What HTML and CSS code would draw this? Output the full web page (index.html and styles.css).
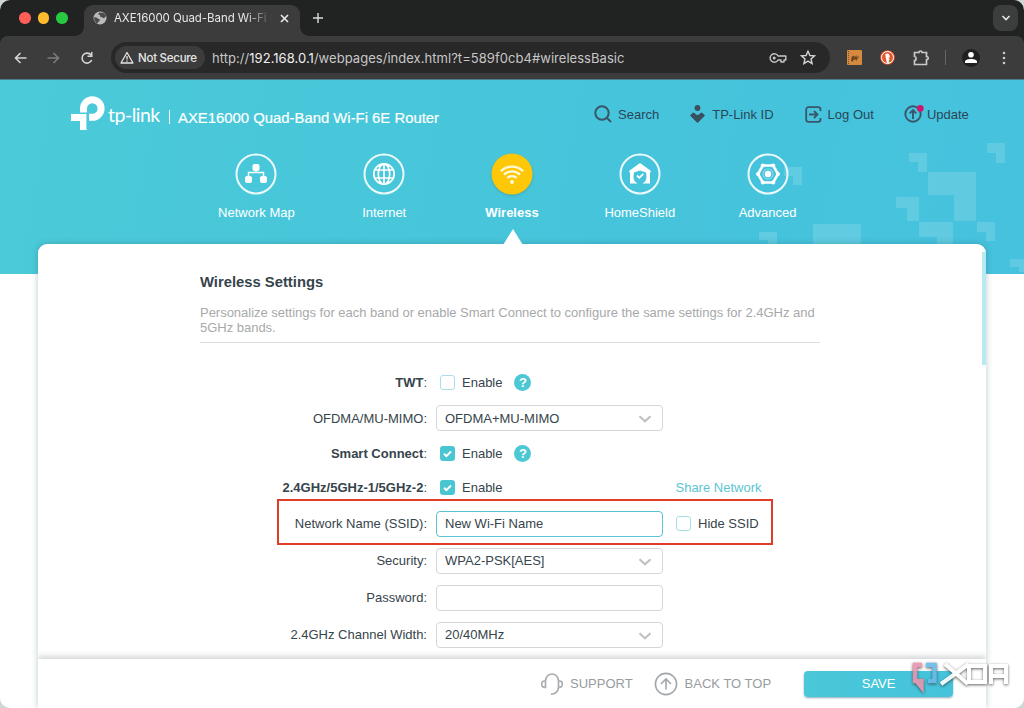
FILE: index.html
```html
<!DOCTYPE html>
<html lang="en">
<head>
<meta charset="utf-8">
<title>AXE16000 Quad-Band Wi-Fi 6E Router</title>
<link rel="stylesheet" href="styles.css">
</head>
<body>
<div class="window">
  <header class="chrome">
    <div class="tabstrip">
      <div class="lights"><i class="red"></i><i class="yellow"></i><i class="green"></i></div>
      <div class="tab">
        <svg class="globe" width="14" height="14" viewBox="0 0 14 14"><circle cx="7" cy="7" r="6.500" fill="#b9babb"/><path d="M1 6.200l2.500.2 1.700 1.400 1.600.6-.3 1.800-1.600.8-.2 1.500-1.600-.6L1.400 9zM6 1.500l-.8 1.900 2 .6-.3 1.600 2.100.7 1.600 1 2-1.300.2-1.800L10.500 2z" fill="#4a4a4a"/></svg>
        <span class="tab-title">AXE16000 Quad-Band Wi-Fi 6</span>
        <svg class="close" width="9" height="9" viewBox="0 0 9 9"><path d="M1 1l7 7M8 1L1 8" stroke="#e9e9e9" stroke-width="1.600"/></svg>
      </div>
      <svg class="plus" width="12" height="12" viewBox="0 0 12 12"><path d="M6 1v10M1 6h10" stroke="#dcdcdc" stroke-width="1.400"/></svg>
      <div class="tabmenu"><svg width="10" height="6" viewBox="0 0 10 6"><path d="M1.500 1L5 4.500 8.500 1" fill="none" stroke="#e4e4e4" stroke-width="1.600"/></svg></div>
    </div>
    <div class="toolbar">
      <svg class="nav" width="14" height="14" viewBox="0 0 14 14"><path d="M12.500 7H2M6.500 2L1.500 7l5 5" fill="none" stroke="#d4d4d4" stroke-width="1.600"/></svg>
      <svg class="nav fwd" width="14" height="14" viewBox="0 0 14 14"><path d="M.5 7H11M6.500 2l5 5-5 5" fill="none" stroke="#7c7c7c" stroke-width="1.600"/></svg>
      <svg class="nav reload" width="14" height="14" viewBox="0 0 14 14"><path d="M11.700 9A5 5 0 1 1 11 4M11.700 1v4.200H7.500" fill="none" stroke="#d4d4d4" stroke-width="1.600"/></svg>
      <div class="omnibox">
        <div class="chip">
          <svg width="14" height="13" viewBox="0 0 14 13"><path d="M7 1.500L13 12H1z" fill="none" stroke="#e3e3e3" stroke-width="1.300" stroke-linejoin="round"/><path d="M7 5v3.600M7 9.500v1.200" stroke="#e3e3e3" stroke-width="1.300"/></svg>
          <span>Not Secure</span>
        </div>
        <span class="url">http://<b>192.168.0.1</b>/webpages/index.html?t=589f0cb4#wirelessBasic</span>
        <svg class="key" width="18" height="12" viewBox="0 0 18 12"><path d="M9 4a4.200 4.200 0 1 0 0 4h3v2h3V8h1.800V4z" fill="none" stroke="#c7c7c7" stroke-width="1.400" stroke-linejoin="round"/><circle cx="5.200" cy="6" r="1.500" fill="#c7c7c7"/></svg>
        <svg class="star" width="16" height="15" viewBox="0 0 16 15"><path d="M8 1.200l1.900 4.300 4.700.4-3.600 3.100 1.100 4.600L8 11.100l-4.100 2.500L5 9 1.400 5.900l4.700-.4z" fill="none" stroke="#d2d2d2" stroke-width="1.400"/></svg>
      </div>
      <div class="exts">
        <svg width="15" height="15" viewBox="0 0 15 15"><rect width="15" height="15" rx="1" fill="#d68a3f"/><path d="M1.500 1v13" stroke="#76502b" stroke-dasharray="1 1"/><path d="M4 11l.6-4 1.800-1.500L8 7l1.300-2 .5 2.500L12 5.200l-1 3.300-1 .5-.3 2-1-1.500-2 .3-.7 1.700z" fill="#70461c"/></svg>
        <svg class="duck" width="15" height="15" viewBox="0 0 15 15"><circle cx="7.500" cy="7.500" r="7.300" fill="#e4572e"/><circle cx="7.500" cy="7.500" r="6" fill="none" stroke="#fff"/><path d="M5.300 4.200c2-1.500 4.500-.2 4.400 2.600l-.6 1.400.7 4.400-2.800.5-1.200-5.200z" fill="#fff"/><path d="M8.300 7.200l2.200.4-2 .8z" fill="#f6b82d"/><circle cx="9.500" cy="11" r="1" fill="#56a54a"/></svg>
        <svg class="puzzle" width="17" height="16" viewBox="0 0 17 16"><path d="M1.500 2.500H6c-.1-2 3-2 3 0h4.500v4c2.300-.1 2.300 3.300 0 3.200v4.800h-12v-4c2.200-.2 2.200-3.800 0-4z" fill="none" stroke="#c9c9c9" stroke-width="1.700"/></svg>
        <i class="divider"></i>
        <div class="avatar"><svg width="12" height="11" viewBox="0 0 12 11"><circle cx="6" cy="2.800" r="2.800" fill="#fff"/><path d="M0 11V9.500C0 6 12 6 12 9.500V11z" fill="#fff"/></svg></div>
        <svg class="kebab" width="4" height="14" viewBox="0 0 4 14" fill="#c9c9c9"><circle cx="2" cy="2" r="1.300"/><circle cx="2" cy="7" r="1.300"/><circle cx="2" cy="12" r="1.300"/></svg>
      </div>
    </div>
  </header>

  <main class="page">
    <svg class="pixels" width="274" height="194" viewBox="0 0 274 194" fill="#fff" fill-opacity=".14">
      <path d="M34 87h18v18h-9v-9h-9zM159 73h18v19h-9V82h-9zM237 63h18v20h-9V73h-9zM178 92h48v49h-22v-26h-26zM146 117h23v24h-12v-13h-11zM169 142h34v22h-16v-7h-18zM227 142h18v19h-9v-9h-9zM63 144h48v20H63zM9 152h18v12h-9v-4H9zM260 179h14v13h-5v-5h-9z"/>
    </svg>
    <div class="topline">
      <svg class="mark" width="35" height="34" viewBox="0 0 35 34"><path d="M13.500 16.500V12.500a8.800 8.800 0 1 1 8.800 8.800H19" fill="none" stroke="#fff" stroke-width="7"/><path d="M1 18h15.800v16h-6.800v-9H1z" fill="#fff"/><path d="M9 17.500h8V33" fill="none" stroke="#49c7db" stroke-width="1"/></svg>
      <span class="brand">tp-link</span><i class="bar"></i>
      <span class="model">AXE16000 Quad-Band Wi-Fi 6E Router</span>
      <a class="act search"><svg width="18" height="18" viewBox="0 0 18 18" fill="none" stroke="#39566a" stroke-width="2"><circle cx="8" cy="8" r="6.700"/><path d="M13 13l4 4"/></svg>Search</a>
      <a class="act tpid"><svg width="15" height="18" viewBox="0 0 15 18" fill="#39505f"><circle cx="7.500" cy="3" r="2.900"/><path d="M0 10.500L3 7.500l1.500.5q3 4 6 0L12 7.500l3 3L7.500 18z"/></svg>TP-Link ID</a>
      <a class="act logout"><svg width="17" height="17" viewBox="0 0 17 17" fill="none" stroke="#39566a" stroke-width="1.800"><path d="M15.500 5V3.500a2.300 2.300 0 0 0-2.300-2.300H3.500a2.300 2.300 0 0 0-2.300 2.300v10a2.300 2.300 0 0 0 2.300 2.300h9.700a2.300 2.300 0 0 0 2.300-2.300V12M4 8.500h8M9 5l3.500 3.500L9 12"/></svg>Log Out</a>
      <a class="act update"><svg width="20" height="18" viewBox="0 0 20 18"><g fill="none" stroke="#39566a" stroke-width="1.900"><circle cx="9" cy="9" r="7.700"/><path d="M9 14V5M5.700 8.300L9 5l3.300 3.300"/></g><circle cx="16.300" cy="3.400" r="3.300" fill="#d1126e"/></svg>Update</a>
    </div>
    <nav class="menu">
      <a><svg width="42" height="42" viewBox="0 0 42 42"><circle class="ring" cx="21" cy="21" r="19.500"/><rect x="17.500" y="11" width="7" height="7" rx="2" fill="#fff"/><rect x="10" y="23" width="7" height="7" rx="2" fill="#fff"/><rect x="25" y="23" width="7" height="7" rx="2" fill="#fff"/><path d="M21 17v3M13.500 24v-4.500h15V24" fill="none" stroke="#fff" stroke-width="1.500"/></svg><span>Network Map</span></a>
      <a><svg width="42" height="42" viewBox="0 0 42 42"><circle class="ring" cx="21" cy="21" r="19.500"/><g fill="none" stroke="#fff" stroke-width="1.700"><circle cx="21" cy="21" r="10.200"/><ellipse cx="21" cy="21" rx="5.700" ry="10.200"/><path d="M21 11v20M12 17h18M12 25h18"/></g></svg><span>Internet</span></a>
      <a class="on"><svg width="42" height="42" viewBox="0 0 42 42"><circle cx="21" cy="21" r="20.500" fill="#fec809"/><g fill="none" stroke="#fff8d8" stroke-width="2.300"><path d="M9.800 18.200a16 16 0 0 1 22.400 0M13 21.600a11.500 11.500 0 0 1 16 0M16.200 25a6.900 6.900 0 0 1 9.600 0"/></g><circle cx="21" cy="29" r="2" fill="#fff8d8"/></svg><span>Wireless</span></a>
      <a><svg width="42" height="42" viewBox="0 0 42 42"><circle class="ring" cx="21" cy="21" r="19.500"/><path d="M21 10l11 8-1 2v10.500h-7.500L26 28.500c2-2.500 1.500-6.500 1-9l-6-2-6 2c-.5 2.500-1 6.500 1 9l2.500 2H11V20l-1-2z" fill="#fff"/><path d="M18 22.500l2.300 2.300 4-4" fill="none" stroke="#fff" stroke-width="1.800"/></svg><span>HomeShield</span></a>
      <a><svg width="42" height="42" viewBox="0 0 42 42"><circle class="ring" cx="21" cy="21" r="19.500"/><path d="M15.800 12.500h10.400L31 21l-4.800 8.500H15.800L11 21z" fill="none" stroke="#fff" stroke-width="2.600"/><g fill="#fff"><circle cx="15.800" cy="12.500" r="2"/><circle cx="26.200" cy="12.500" r="2"/><circle cx="31" cy="21" r="2"/><circle cx="26.200" cy="29.500" r="2"/><circle cx="15.800" cy="29.500" r="2"/><circle cx="11" cy="21" r="2"/></g><circle cx="21" cy="21" r="3.200" fill="#fff"/><circle cx="21" cy="21" r="5" fill="none" stroke="#fff" stroke-opacity=".35" stroke-width="1.200"/></svg><span>Advanced</span></a>
    </nav>

    <section class="card">
      <i class="pointer"></i><i class="scroll"></i>
      <div class="intro">
        <h1>Wireless Settings</h1>
        <p>Personalize settings for each band or enable Smart Connect to configure the same settings for 2.4GHz and<br>5GHz bands.</p>
      </div>
      <form class="form">
        <div class="row r-twt"><label><b>TWT</b>:</label><i class="box"></i><span class="opt">Enable</span><i class="help">?</i></div>
        <div class="row r-mimo"><label>OFDMA/MU-MIMO:</label><div class="field">OFDMA+MU-MIMO<svg class="chev" width="14" height="8" viewBox="0 0 14 8"><path d="M1.500 1.200L7 6.200l5.500-5"/></svg></div></div>
        <div class="row r-smart"><label><b>Smart Connect</b>:</label><i class="box checked"><svg width="9" height="8" viewBox="0 0 9 8"><path d="M1 3.800l2.400 2.400L8 1.500" fill="none" stroke="#fff" stroke-width="2"/></svg></i><span class="opt">Enable</span><i class="help">?</i></div>
        <div class="row r-band"><label><b>2.4GHz/5GHz-1/5GHz-2</b>:</label><i class="box checked"><svg width="9" height="8" viewBox="0 0 9 8"><path d="M1 3.800l2.400 2.400L8 1.500" fill="none" stroke="#fff" stroke-width="2"/></svg></i><span class="opt">Enable</span><a class="share">Share Network</a></div>
        <div class="row"><i class="outline"></i><label>Network Name (SSID):</label><div class="field focus">New Wi-Fi Name</div><i class="box hide"></i><span class="opt">Hide SSID</span></div>
        <div class="row"><label>Security:</label><div class="field">WPA2-PSK[AES]<svg class="chev" width="14" height="8" viewBox="0 0 14 8"><path d="M1.500 1.200L7 6.200l5.500-5"/></svg></div></div>
        <div class="row"><label>Password:</label><div class="field"></div></div>
        <div class="row"><label>2.4GHz Channel Width:</label><div class="field">20/40MHz<svg class="chev" width="14" height="8" viewBox="0 0 14 8"><path d="M1.500 1.200L7 6.200l5.500-5"/></svg></div></div>
        <div class="row"><label></label><div class="field last"></div></div>
      </form>
      <footer class="foot">
        <a class="support"><svg width="24" height="24" viewBox="0 0 24 24" fill="none" stroke="#a9adb0" stroke-width="1.700"><path d="M5.500 9H4.300A2.500 2.500 0 0 0 1.800 11.500v1.300a2.500 2.500 0 0 0 2.500 2.500h1.200zM5.500 9C6 4.500 8.500 2 12 2s6 2.500 6.500 7M18.500 9h1.200a2.500 2.500 0 0 1 2.500 2.500v1.300a2.500 2.500 0 0 1-2.500 2.500h-1.200zM18.500 15.300c-.5 4.200-3 6.700-7.500 6.900"/></svg><span>SUPPORT</span></a>
        <a class="totop"><svg width="24" height="24" viewBox="0 0 24 24" fill="none" stroke="#a3a7aa" stroke-width="1.600"><circle cx="12" cy="12" r="10.600"/><path d="M12 17.500V7.500M7 12l5-5 5 5"/></svg><span>BACK TO TOP</span></a>
        <button type="button">SAVE</button>
      </footer>
    </section>
    <svg class="xda" width="104" height="38" viewBox="0 0 104 38">
      <g fill="none" stroke-width="4.500"><path d="M14 6H7v16h6.500v6L8.500 22" stroke="#e993ad"/><path d="M18 6h8.500v16H20" stroke="#69b9e6"/></g>
      <g fill="none" stroke="#fff" stroke-width="4"><path d="M37 5l23 20M61 5L33 25M61 7h16v16H61zM83 25V7h15v18M83 17h15"/></g>
    </svg>
  </main>
</div>
</body>
</html>
```

FILE: styles.css
```css
* { box-sizing: border-box; }
body { margin: 0; background: #cfd6d8; font-family: "Liberation Sans", Arial, sans-serif; font-size: 13px; color: #36444b; }
i { font-style: normal; display: block; }
svg { display: block; flex: none; }
.window { width: 1024px; height: 708px; border-radius: 10px; overflow: hidden; background: #fff; }

/* Browser chrome */
.chrome { height: 80px; background: #202322; font-family: Inter, Roboto, sans-serif; border-bottom: 1px solid #4a7f8a; }
.tabstrip { height: 36px; display: flex; align-items: center; }
.lights { display: flex; gap: 7px; padding-left: 19px; width: 84px; }
.lights i { width: 11.500px; height: 11.500px; border-radius: 50%; }
.red { background: #fe5f57; }
.yellow { background: #febb2e; }
.green { background: #28c840; }
.tab { position: relative; align-self: flex-end; width: 216px; height: 31px; background: #3c3c3c; border-radius: 9px 9px 0 0; display: flex; align-items: center; padding: 0 0 5px 9px; }
.tab::before, .tab::after { content: ""; position: absolute; bottom: 0; width: 9px; height: 9px; }
.tab::before { left: -9px; background: radial-gradient(circle at 0 0, transparent 8.500px, #3c3c3c 9px); }
.tab::after { right: -9px; background: radial-gradient(circle at 100% 0, transparent 8.500px, #3c3c3c 9px); }
.tab-title { margin-left: 7px; width: 162px; margin-top: -1px; font-size: 11.500px; letter-spacing: -.06px; color: #e6e6e6; white-space: nowrap; -webkit-mask-image: linear-gradient(90deg, #000 132px, transparent 158px); }
.close { margin-left: 4px; }
.plus { margin-left: 12px; }
.tabmenu { margin: 0 6px 0 auto; width: 25px; height: 26px; border-radius: 8px; background: #3c3e3d; display: grid; place-items: center; }
.toolbar { height: 43px; background: #3c3c3c; border-radius: 8px 8px 0 0; display: flex; align-items: center; padding: 0 18px 0 14px; }
.fwd { margin-left: 19px; }
.reload { margin-left: 19px; }
.omnibox { width: 719px; height: 31px; margin-left: 17px; border-radius: 16px; background: #282828; display: flex; align-items: center; padding: 0 14px 0 4px; }
.chip { width: 90px; height: 23px; border-radius: 12px; background: #3c3c3c; display: flex; align-items: center; gap: 4px; padding-left: 5px; font-size: 11.500px; font-weight: 500; color: #e6e6e6; white-space: nowrap; letter-spacing: -.25px; }
.url { margin-left: 7px; font-size: 13px; letter-spacing: .04px; color: #c7c7c7; white-space: nowrap; }
.url b { font-weight: 400; color: #efefef; }
.key { margin-left: auto; }
.star { margin-left: 13px; }
.exts { flex: 1; margin-left: 17px; display: flex; align-items: center; }
.duck { margin-left: 18px; }
.puzzle { margin-left: 18px; }
.divider { width: 1px; height: 15px; margin-left: 15px; background: #666; }
.avatar { width: 18px; height: 18px; margin-left: 16px; border-radius: 50%; background: #202020; display: grid; place-items: center; }
.kebab { margin-left: auto; }

/* Router page */
.page { position: relative; height: 628px; background: linear-gradient(100deg, #4bcad9, #46c4db 60%, #46c2de) 0 0 / 100% 194px no-repeat; }
.pixels { position: absolute; right: 0; top: 0; }
.topline { position: relative; height: 68px; display: flex; align-items: center; padding-left: 70px; white-space: nowrap; }
.mark { margin-top: -2px; }
.brand { margin-left: 3px; padding-top: 1px; width: 52px; font: 19.500px/24px "Lato", sans-serif; letter-spacing: -.5px; color: #fff; }
.bar { width: 1px; height: 14px; margin: 6px 8px 0 9px; background: #fff; }
.model { width: 261px; margin-top: 8px; font-size: 14.860px; color: #fff; -webkit-text-stroke: .2px #fff; }
.act { display: flex; align-items: center; gap: 6px; color: #294758; }
.search { margin-left: 155px; }
.tpid { margin-left: 31px; gap: 7px; }
.logout { margin-left: 31px; }
.update { margin-left: 30px; gap: 3px; }
.menu { position: relative; display: grid; grid-template-columns: repeat(5, 127.800px); padding: 5px 0 0 192.500px; }
.menu a { display: flex; flex-direction: column; align-items: center; gap: 10px; color: #fff; line-height: 15px; }
.menu .ring { fill: none; stroke: #ecfafc; stroke-width: 2; }
.menu .on { font-weight: 700; }
.menu .on svg { filter: drop-shadow(0 1px 1px rgba(60, 100, 80, .35)); }

.card { position: absolute; left: 38px; top: 164px; width: 948px; height: 464px; background: #fff; border-radius: 9px 9px 0 0; box-shadow: 0 0 6px rgba(25, 75, 85, .3); }
.pointer { position: absolute; left: 465px; top: -15px; border: 10px solid transparent; border-top: 0; border-bottom: 16px solid #fff; }
.scroll { position: absolute; right: 0; top: 8px; width: 4px; height: 113px; background: #b7eaf0; }
.intro { margin: 0 166px 0 162px; padding-top: 29px; height: 99px; border-bottom: 1px solid #dcdddd; }
.intro h1 { margin: 0; font-size: 14.800px; line-height: 18px; }
.intro p { margin: 14px 0 0; line-height: 15px; letter-spacing: -.017px; color: #a7a9aa; white-space: nowrap; }
.form { padding-top: 22px; height: 315px; overflow: visible; }
.row { position: relative; height: 37px; display: flex; align-items: center; white-space: nowrap; }
.r-twt { height: 34px; }
.r-mimo { height: 38px; }
.r-smart { height: 33px; }
.r-band { height: 35px; }
.row label { width: 389px; margin-right: 9px; text-align: right; }
.field { position: relative; width: 227px; height: 26px; border: 1px solid #d4d6d7; border-radius: 4px; padding: 0 10px 0 8px; display: flex; align-items: center; justify-content: space-between; background: #fff; }
.field.focus { border-color: #5bc3d2; }
.field.last { border-color: #999; }
.chev { margin-top: 2px; fill: none; stroke: #bfc1c2; stroke-width: 2.200; }
.box { width: 15px; height: 15px; margin: 0 0 0 4px; border: 1.500px solid #a8dfe5; border-radius: 3px; }
.box.checked { border: 0; background: #4ac6d3; display: grid; place-items: center; }
.box.hide { margin-left: 13px; }
.opt { margin-left: 7px; }
.help { width: 17px; height: 17px; margin: 0 0 0 12px; border-radius: 50%; background: #4cc7d4; color: #fff; font-size: 13px; font-weight: 700; line-height: 17px; text-align: center; }
.share { margin-left: 173px; color: #5bc5d3; }
.outline { position: absolute; left: 239px; top: -6px; width: 496px; height: 46px; border: 2px solid #e03c28; }
.foot { position: absolute; left: 0; right: 0; bottom: 0; height: 49px; background: #fff; box-shadow: 0 -3px 5px rgba(70, 80, 85, .22); clip-path: inset(-12px 0 0 0); display: flex; align-items: center; color: #989c9f; }
.foot a { display: flex; align-items: center; white-space: nowrap; }
.support { margin-left: 502px; gap: 6px; }
.totop { margin-left: 21px; gap: 7px; }
.foot button { width: 149px; height: 26px; margin-left: 33px; border: 0; border-radius: 4px; padding: 0; background: linear-gradient(90deg, #4ac7d8, #44c3dc); color: #fff; font: 13px "Liberation Sans", Arial, sans-serif; box-shadow: 0 1px 2px rgba(30, 90, 110, .5); }
.xda { position: absolute; left: 908px; top: 579px; filter: drop-shadow(0 1px 1.500px rgba(50, 50, 50, .85)); opacity: .9; }
```
